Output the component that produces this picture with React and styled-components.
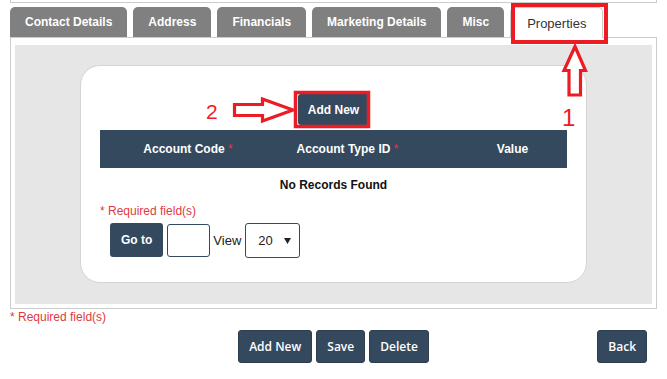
import React from "react";
import styled, { createGlobalStyle } from "styled-components";

const Global = createGlobalStyle`
  html, body { margin: 0; padding: 0; background: #fff; }
  body { font-family: "Liberation Sans", Arial, sans-serif; color: #333; }
  * { box-sizing: border-box; }
`;

const NAVY = "#34495e";
const RED = "#ed1c24";
const REQ = "#e0393e";

const Page = styled.div`
  position: relative;
  width: 667px;
  height: 379px;
  padding: 0 10px;
  overflow: hidden;
`;

const TopBox = styled.div`
  width: 647px;
  height: 3px;
  border: 1px solid #ccc;
  border-top: none;
`;

const Tabs = styled.div`
  display: flex;
  gap: 6px;
  margin-top: 4px;
  height: 30px;
  position: relative;
  z-index: 1;
`;

const Tab = styled.div`
  height: ${(p) => (p.$active ? "31px" : "30px")};
  padding: 0 ${(p) => (p.$active ? 16 : 15)}px;
  display: flex;
  align-items: center;
  justify-content: center;
  border-radius: 5px 5px 0 0;
  font-size: ${(p) => (p.$active ? 13 : 12)}px;
  font-weight: ${(p) => (p.$active ? 400 : 700)};
  background: ${(p) => (p.$active ? "#fff" : "#808080")};
  color: ${(p) => (p.$active ? "#333" : "#fff")};
  border: ${(p) => (p.$active ? "1px solid #ccc" : "none")};
  border-bottom: none;
`;

const Panel = styled.div`
  width: 647px;
  border: 1px solid #ccc;
  padding: 7px 4px 4px;
`;

const Gray = styled.div`
  background: #e6e6e6;
  padding: 20px 0 21px;
  display: flex;
  justify-content: center;
`;

const Card = styled.div`
  width: 507px;
  background: #fff;
  border: 1px solid #d4d4d4;
  border-radius: 20px;
  padding: 28px 19px 24px;
  display: flex;
  flex-direction: column;
`;

const Center = styled.div`
  display: flex;
  justify-content: center;
`;

const SmallBtn = styled.button`
  height: ${(p) => p.$h || 31}px;
  padding: 0 ${(p) => p.$px || 10}px;
  background: ${NAVY};
  color: #fff;
  border: none;
  border-radius: 3px;
  font-family: "Liberation Sans", Arial, sans-serif;
  font-size: 12px;
  font-weight: 700;
  display: flex;
  align-items: center;
  justify-content: center;
`;

const Header = styled.div`
  margin-top: 5px;
  height: 38px;
  background: ${NAVY};
  display: grid;
  grid-template-columns: 176px 143px 1fr;
  align-items: center;
  color: #fff;
  font-size: 12px;
  font-weight: 700;
`;

const HeadCell = styled.div`
  text-align: center;
  padding-left: ${(p) => p.$pl || 0}px;
`;

const Star = styled.span`
  color: ${REQ};
  font-weight: 400;
`;

const Empty = styled.div`
  height: 34px;
  line-height: 34px;
  text-align: center;
  font-size: 12px;
  font-weight: 700;
  color: #111;
`;

const Required = styled.div`
  color: ${REQ};
  font-size: 12px;
  line-height: 14px;
  margin-top: ${(p) => p.$mt || 0}px;
`;

const Pager = styled.div`
  display: flex;
  align-items: center;
  gap: 4px;
  margin: 4px 0 0 10px;
  height: 36px;
`;

const Box = styled.div`
  width: ${(p) => p.$w}px;
  height: ${(p) => p.$h}px;
  border: 1px solid ${NAVY};
  border-radius: 3px;
  background: #fff;
  display: flex;
  align-items: center;
  justify-content: space-between;
  padding: 0 8px 0 12px;
  font-size: 13px;
  color: #222;
`;

const ViewLabel = styled.span`
  font-size: 13px;
  color: #222;
  margin-left: -1px;
`;

const BottomBar = styled.div`
  margin-top: 6px;
  display: grid;
  grid-template-columns: 1fr auto 1fr;
  align-items: center;
`;

const Group = styled.div`
  grid-column: 2;
  display: flex;
  gap: 4px;
`;

const BigBtn = styled.button`
  height: 33px;
  padding: 0 10px;
  background: ${NAVY};
  color: #fff;
  border: 1px solid #2c3e50;
  border-radius: 3px;
  font-family: "Open Sans", "Liberation Sans", sans-serif;
  font-size: 12px;
  font-weight: 600;
  display: flex;
  align-items: center;
  justify-content: center;
`;

const BackWrap = styled.div`
  grid-column: 3;
  justify-self: end;
  margin-right: 10px;
`;

const Overlay = styled.svg`
  position: absolute;
  left: 0;
  top: 0;
  pointer-events: none;
  z-index: 5;
`;

const Digit = styled.span`
  position: absolute;
  left: ${(p) => p.$x}px;
  top: ${(p) => p.$y}px;
  font-family: "Liberation Sans", Arial, sans-serif;
  font-size: ${(p) => p.$size}px;
  line-height: 1;
  color: ${RED};
  z-index: 6;
`;

export default function App() {
  return (
    <>
      <Global />
      <Page>
        <TopBox />
        <Tabs>
          <Tab>Contact Details</Tab>
          <Tab>Address</Tab>
          <Tab>Financials</Tab>
          <Tab>Marketing Details</Tab>
          <Tab>Misc</Tab>
          <Tab $active>Properties</Tab>
        </Tabs>
        <Panel>
          <Gray>
            <Card>
              <Center>
                <SmallBtn $px={10}>Add New</SmallBtn>
              </Center>
              <Header>
                <HeadCell>
                  Account Code <Star>*</Star>
                </HeadCell>
                <HeadCell>
                  Account Type ID <Star>*</Star>
                </HeadCell>
                <HeadCell $pl={39}>Value</HeadCell>
              </Header>
              <Empty>No Records Found</Empty>
              <Required $mt={2}>* Required field(s)</Required>
              <Pager>
                <SmallBtn $h={34} $px={11}>Go to</SmallBtn>
                <Box $w={43} $h={33} />
                <ViewLabel>View</ViewLabel>
                <Box $w={55} $h={35}>
                  <span>20</span>
                  <svg width="7" height="7" viewBox="0 0 7 7">
                    <path d="M0 1 L7 1 L3.5 7 Z" fill="#222" />
                  </svg>
                </Box>
              </Pager>
            </Card>
          </Gray>
        </Panel>
        <Required $mt={1}>* Required field(s)</Required>
        <BottomBar>
          <Group>
            <BigBtn>Add New</BigBtn>
            <BigBtn>Save</BigBtn>
            <BigBtn>Delete</BigBtn>
          </Group>
          <BackWrap>
            <BigBtn>Back</BigBtn>
          </BackWrap>
        </BottomBar>

        <Overlay width="667" height="379" viewBox="0 0 667 379">
          <rect x="513" y="5" width="93" height="37" fill="none" stroke={RED} strokeWidth="4" />
          <rect x="295.5" y="92.5" width="73" height="34" fill="none" stroke={RED} strokeWidth="3.5" />
          <polygon
            points="575,46.5 585.5,70.5 580.5,70.5 580.5,95 569,95 569,70.5 564,70.5"
            fill="#fff"
            stroke={RED}
            strokeWidth="3.2"
            strokeLinejoin="miter"
          />
          <polygon
            points="234.5,104.5 262.5,104.5 262.5,99 293,110 262.5,121 262.5,115.5 234.5,115.5"
            fill="#fff"
            stroke={RED}
            strokeWidth="3.2"
          />
        </Overlay>
        <Digit $x={206} $y={101} $size={21}>2</Digit>
        <Digit $x={562} $y={106} $size={24}>1</Digit>
      </Page>
    </>
  );
}
